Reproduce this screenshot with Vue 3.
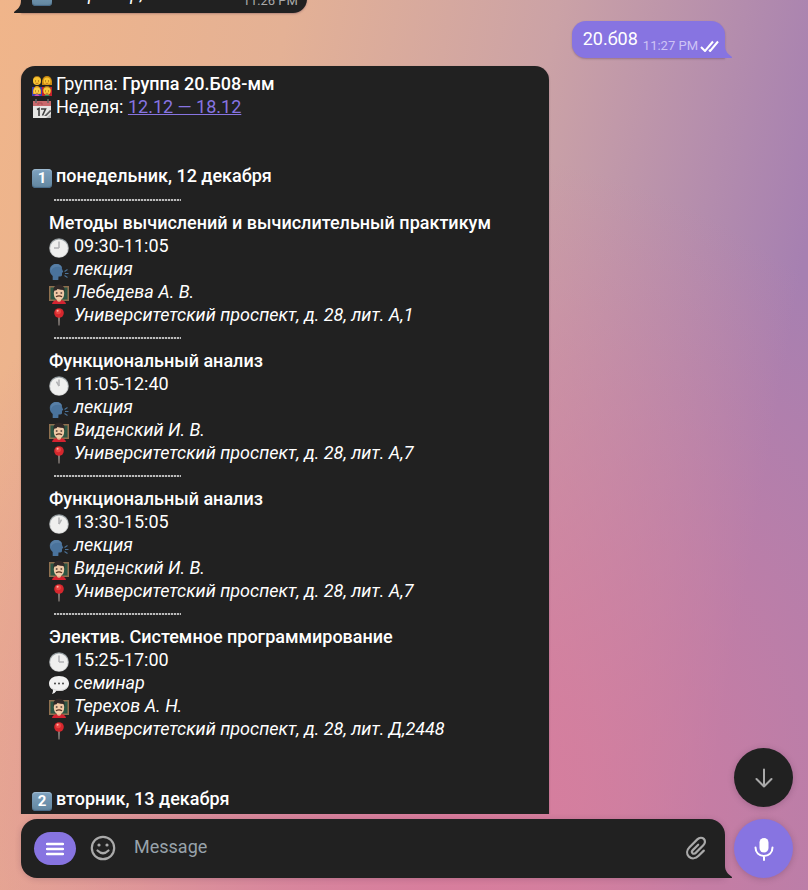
<template>
  <div class="chat">
    <svg class="sprite" aria-hidden="true">
      <symbol id="family" viewBox="0 0 20 20">
        <path d="M0 11h10v9H0z" fill="#3b3fb0" />
        <path d="M10 11h10v9H10z" fill="#c3202c" />
        <path d="M1 5Q1 0 5 0t4 5z" fill="#a8741a" />
        <circle cx="5" cy="5" r="4" fill="#f9c531" />
        <path d="M10 9V5q1-5 5-5t5 5v4z" fill="#c98a12" />
        <circle cx="15" cy="5" r="3.5" fill="#f9c531" />
        <path d="M1 18v-3q1-5 4-5t4 5v3z" fill="#e9a21c" />
        <circle cx="5" cy="15" r="3.4" fill="#fbd24a" />
        <path d="M2 20q3-3 6 0z" fill="#d848b4" />
        <path d="M11 15q0-5 4-5t4 5z" fill="#a8741a" />
        <circle cx="15" cy="15" r="3.7" fill="#fbca3a" />
        <path d="M12 20q3-3 6 0z" fill="#268c61" />
        <path d="M3 5h1m2 0h1M13 5h1m2 0h1M3 15h1m2 0h1M13 15h1m2 0h1" stroke="#8a5b13" />
        <path d="M3.500 7q1.500 1 3 0M13.500 7q1.500 1 3 0M3.500 17q1.500 1 3 0M13.500 17q1.500 1 3 0" stroke="#a85420" fill="none" stroke-width=".7" />
      </symbol>
      <symbol id="calendar" viewBox="0 0 20 20">
        <path d="M1 2h18v17H1z" fill="#e6e6e4" />
        <path d="M1 2h18v5H1z" fill="#c9696c" />
        <path d="M4 0v4M16 0v4" stroke="#666" stroke-width="1.500" />
        <path d="M7 3v2H5m4-2v2h2" stroke="#a94e52" fill="none" />
        <path d="M5 10.500l2-1V17M9 10h4.500l-3 6.500" stroke="#3d3d3d" stroke-width="1.600" fill="none" />
        <path d="M12 17l6-6 1.500 1-5 5z" fill="#5b5b5b" />
        <path d="M14 19l5-4v4z" fill="#b5b5b5" />
      </symbol>
      <symbol id="speaking" viewBox="0 0 20 20">
        <path d="M7 3c4 0 6 2 6 5l1.300 3-1.300.8v2.200c0 1.400-1 1.500-3.500 1.500L9.300 19H3.700v-4C2 13.600.8 11.800.8 9 .8 5.500 3.500 3 7 3z" fill="#4a739c" />
        <path d="M7 3c3 0 5 1 6 4-3-2-9-2-11 3-.8-4 2-7 5-7z" fill="#587fa6" />
        <path d="M15.500 10.500l3-2M16 12.500h3.500M15.500 14.500l3 2" stroke="#4b7196" stroke-width="1.200" />
      </symbol>
      <symbol id="teacher" viewBox="0 0 20 20">
        <path d="M0 2h20v15H0z" fill="#8f704f" />
        <path d="M1.500 3.500h17v12h-17z" fill="#2c5543" />
        <path d="M3 20q.5-4 7-4t7 4z" fill="#d52330" />
        <path d="M8 13h4v4l-2 1-2-1z" fill="#e0ad88" />
        <path d="M4.800 9q0-6 5.200-6t5.200 6q0 7-5.200 7.500Q4.800 16 4.800 9z" fill="#f0c9a6" />
        <path d="M4.500 9Q3 1 10 .5 17 1 15.500 9L14.500 6q-3 0-6-1-1 2-3 1.500z" fill="#302827" />
        <circle cx="7.700" cy="9" r="1" fill="#6b5548" />
        <circle cx="12.300" cy="9" r="1" fill="#6b5548" />
        <path d="M7 12.800q3-2 6 0" stroke="#573322" stroke-width="1.300" fill="none" />
      </symbol>
      <symbol id="pin" viewBox="0 0 20 20">
        <path d="M9.200 9h1.600l-.3 9.500h-1z" fill="#a39993" />
        <circle cx="10" cy="6" r="4.800" fill="#d6272d" />
        <circle cx="9.300" cy="4.600" r="2.600" fill="#ea4643" />
        <circle cx="8.600" cy="3.800" r="1" fill="#ffb0a5" />
      </symbol>
      <symbol id="speech" viewBox="0 0 20 20">
        <path d="M10 1c6 0 10 3 10 7.500S16 16 10 16q-1.500 0-2.500-.2Q5.500 19 3 19q1.200-1.500 1-4.200C1.500 13.500 0 11.500 0 8.500 0 4 4 1 10 1z" fill="#f1f1f1" />
        <path d="M1 11q3 4 9 4t9-4q-2 5-9 5-6 0-9-5z" fill="#d3d3d3" />
        <circle cx="6" cy="8.500" r="1" fill="#454545" />
        <circle cx="10" cy="8.500" r="1" fill="#454545" />
        <circle cx="14" cy="8.500" r="1" fill="#454545" />
      </symbol>
      <symbol id="tail" viewBox="0 0 8 12">
        <path d="M0 0C0 5 3 8 6.500 10.500Q7.800 12 6 12H0z" fill="currentColor" />
      </symbol>
    </svg>

    <main class="history" ref="history">
      <article class="bubble incoming short">
        <span class="row"><span class="keycap"></span><i>Например, 20.Б08</i></span>
        <time class="time">11:26 PM</time>
        <svg class="tail tail-left"><use href="#tail" /></svg>
      </article>

      <article class="bubble outgoing">
        <span>20.б08</span>
        <time class="time">11:27 PM</time>
        <svg class="checks" viewBox="0 0 19 12" aria-label="Read">
          <path d="M1 7l4 4 8-9.500M9 10l1.200 1L18 1.500" />
        </svg>
        <svg class="tail tail-right"><use href="#tail" /></svg>
      </article>

      <article class="bubble incoming schedule">
        <p class="row">
          <svg class="emoji"><use href="#family" /></svg>
          <span>Группа: <b>Группа 20.Б08-мм</b></span>
        </p>
        <p class="row">
          <svg class="emoji"><use href="#calendar" /></svg>
          <span>Неделя: <a href="#week">12.12 — 18.12</a></span>
        </p>

        <section v-for="day in days" :key="day.number" class="day">
          <h2 class="row"><span class="keycap">{{ day.number }}</span>{{ day.title }}</h2>
          <ul v-if="day.lessons.length" class="lessons">
            <li v-for="lesson in day.lessons" :key="lesson.time" class="lesson">
              <div class="separator"></div>
              <h3>{{ lesson.title }}</h3>
              <p class="row">
                <svg class="emoji" viewBox="0 0 20 20">
                  <defs>
                    <linearGradient :id="'rim' + lesson.hour" x1="0" y1="0" x2="0" y2="1">
                      <stop offset="0" stop-color="#8f989c" />
                      <stop offset="1" stop-color="#d4d4d4" />
                    </linearGradient>
                  </defs>
                  <circle cx="10" cy="10" r="9.800" :fill="`url(#rim${lesson.hour})`" />
                  <circle cx="10" cy="10.300" r="8.800" fill="#efefee" />
                  <path d="M10 10V3.500" class="hand" />
                  <path d="M10 10V5" class="hand" :transform="`rotate(${lesson.hour * 30} 10 10)`" />
                </svg>
                <span>{{ lesson.time }}</span>
              </p>
              <p class="row">
                <svg class="emoji"><use :href="lesson.type === 'лекция' ? '#speaking' : '#speech'" /></svg>
                <i>{{ lesson.type }}</i>
              </p>
              <p class="row">
                <svg class="emoji"><use href="#teacher" /></svg>
                <i>{{ lesson.teacher }}</i>
              </p>
              <p class="row">
                <svg class="emoji"><use href="#pin" /></svg>
                <i>Университетский проспект, д. 28, лит. {{ lesson.room }}</i>
              </p>
            </li>
          </ul>
        </section>
      </article>
    </main>

    <button type="button" class="round scroll-down" aria-label="Scroll down" @click="scrollDown">
      <svg width="18" height="20" viewBox="0 0 18 20">
        <path d="M9 1.500v17M1.500 11l7.500 7.500 7.500-7.500" />
      </svg>
    </button>

    <form class="footer" @submit.prevent="message = ''">
      <div class="composer">
        <button type="button" class="menu" aria-label="Menu">
          <svg width="18" height="14" viewBox="0 0 18 14">
            <path d="M1 2h16M1 7h16M1 12h16" />
          </svg>
        </button>
        <button type="button" class="tool" aria-label="Emoji">
          <svg width="26" height="26" viewBox="0 0 26 26">
            <circle cx="13" cy="13" r="11.200" />
            <path d="M7.500 15.500q5.500 5.500 11 0" />
            <circle cx="9" cy="10" r="1.600" class="dot" />
            <circle cx="17" cy="10" r="1.600" class="dot" />
          </svg>
        </button>
        <input v-model="message" type="text" placeholder="Message" aria-label="Message" />
        <button type="button" class="tool" aria-label="Attach file">
          <svg width="26" height="26" viewBox="0 0 26 26">
            <path d="M20.800 15.600l-5.200 5.200c-3 3-7 3.300-9.700.8-2.600-2.600-2.300-6.500.6-9.400l7.800-7.800c2-2 4.800-2.200 6.500-.5s1.500 4.400-.5 6.400l-7.600 7.600c-1 1-2.400 1.100-3.200.3s-.7-2.100.3-3.100l5.400-5.400" />
          </svg>
        </button>
        <svg class="tail tail-right"><use href="#tail" /></svg>
      </div>
      <button type="button" class="round record" aria-label="Record voice message">
        <svg width="20" height="24" viewBox="0 0 20 24">
          <rect x="5.500" y="1" width="9" height="14.500" rx="4.500" />
          <path d="M1.500 10.500c0 5 3.500 8.500 8.500 8.500s8.500-3.500 8.500-8.500M10 19v4" />
        </svg>
      </button>
    </form>
  </div>
</template>

<script setup>
import { ref, onMounted } from "vue";

const history = ref(null);
const message = ref("");

const days = [
  {
    number: 1,
    title: "понедельник, 12 декабря",
    lessons: [
      {
        title: "Методы вычислений и вычислительный практикум",
        time: "09:30-11:05",
        hour: 9,
        type: "лекция",
        teacher: "Лебедева А. В.",
        room: "А,1",
      },
      {
        title: "Функциональный анализ",
        time: "11:05-12:40",
        hour: 11,
        type: "лекция",
        teacher: "Виденский И. В.",
        room: "А,7",
      },
      {
        title: "Функциональный анализ",
        time: "13:30-15:05",
        hour: 1,
        type: "лекция",
        teacher: "Виденский И. В.",
        room: "А,7",
      },
      {
        title: "Электив. Системное программирование",
        time: "15:25-17:00",
        hour: 3,
        type: "семинар",
        teacher: "Терехов А. Н.",
        room: "Д,2448",
      },
    ],
  },
  { number: 2, title: "вторник, 13 декабря", lessons: [] },
];

function scrollDown() {
  history.value.scrollTop = history.value.scrollHeight;
}

onMounted(() => {
  // the previous message stays partly above the top edge
  history.value.scrollTop = 24;
});
</script>

<style>
body {
  margin: 0;
}
</style>

<style scoped>
.chat {
  position: relative;
  display: flex;
  flex-direction: column;
  height: 100vh;
  overflow: hidden;
  box-sizing: border-box;
  padding-bottom: 12px;
  font-family: Roboto, "Liberation Sans", sans-serif;
  font-size: 18px;
  line-height: 23px;
  color: #fff;
  background:
    radial-gradient(ellipse 75% 75% at 56% 92%, #d97b9c 0%, rgba(217, 123, 156, 0.8) 25%, rgba(217, 123, 156, 0) 100%),
    linear-gradient(100deg, #f0b58a 0%, #e4b195 30%, #cba2a6 58%, #a680b1 88%);
}

.sprite {
  display: none;
}

.history {
  flex: 1;
  min-height: 0;
  display: flex;
  flex-direction: column;
  align-items: flex-start;
  gap: 8px;
  padding: 0 83px 0 21px;
  overflow-y: auto;
  scrollbar-width: none;
}

.bubble {
  position: relative;
  flex-shrink: 0;
  box-sizing: border-box;
  padding: 6px 11px 8px;
  border-radius: 14px;
  box-shadow: 0 1px 2px rgba(60, 30, 60, 0.3);
}

.incoming {
  color: #fff;
  background: #212121;
}

.short {
  display: flex;
  gap: 40px;
  padding-right: 9px;
  border-bottom-left-radius: 0;
}

.outgoing {
  display: flex;
  align-self: flex-end;
  gap: 5px;
  padding-right: 6px;
  background: #8774e1;
  border-bottom-right-radius: 0;
}

.time {
  align-self: flex-end;
  margin-bottom: -4px;
  font-size: 13px;
  line-height: 16px;
  color: #aaa;
}

.outgoing .time {
  color: #cdc3f5;
}

.checks {
  align-self: flex-end;
  width: 19px;
  height: 12px;
  margin: 0 0 -2px -3px;
  fill: none;
  stroke: #fff;
  stroke-width: 2;
}

.tail {
  position: absolute;
  bottom: 0;
  width: 8px;
  height: 12px;
}

.tail-right {
  left: 100%;
}

.tail-left {
  right: 100%;
  transform: scaleX(-1);
}

.incoming .tail {
  color: #212121;
}

.outgoing .tail {
  color: #8774e1;
}

.schedule {
  width: 75%;
  padding-bottom: 60px;
}

.row {
  display: flex;
  align-items: flex-end;
  gap: 4px;
}

.lesson .row {
  gap: 5px;
}

p,
h2,
h3 {
  margin: 0;
  font-size: inherit;
}

b,
h2,
h3 {
  font-weight: 500;
}

a {
  color: #8774e1;
  text-decoration: underline;
}

.emoji {
  flex: none;
  width: 20px;
  height: 20px;
  margin-bottom: -1px;
}

.hand {
  stroke: #b0b1b3;
  stroke-width: 1.5;
}

.keycap {
  flex: none;
  width: 20px;
  height: 19px;
  margin-bottom: -1px;
  border-radius: 4px;
  box-shadow: inset 0 -1px 1px #456885, inset 0 1px 1px #a1bdd3;
  background: linear-gradient(#7fa2c0, #62869f);
  font-size: 15px;
  font-weight: 700;
  line-height: 19px;
  text-align: center;
}

.day {
  padding-top: 46px;
}

.lessons {
  margin: 0;
  padding: 1px 0 1px 17px;
  list-style: none;
}

.separator {
  display: flex;
  align-items: center;
  width: 127px;
  height: 23px;
  margin-left: 5px;
}

.separator::before {
  content: "";
  flex: 1;
  height: 2px;
  background: repeating-linear-gradient(90deg, #bbb 0 2px, #444 2px 3px);
}

.round {
  display: flex;
  align-items: center;
  justify-content: center;
  flex: none;
  width: 59px;
  height: 59px;
  padding: 0;
  border: 0;
  border-radius: 50%;
  cursor: pointer;
  box-shadow: 0 1px 6px rgba(60, 30, 60, 0.25);
}

.round svg {
  fill: none;
  stroke-width: 2;
  stroke-linecap: round;
  stroke-linejoin: round;
}

.scroll-down {
  position: absolute;
  right: 15px;
  bottom: 83px;
  background: #212121;
}

.scroll-down svg {
  stroke: #aaa;
}

.record {
  background: #8774e1;
}

.record svg {
  stroke: #fff;
}

.record rect {
  fill: #fff;
  stroke: none;
}

.footer {
  display: flex;
  gap: 9px;
  padding: 5px 15px 0 21px;
}

.composer {
  position: relative;
  flex: 1;
  min-width: 0;
  display: flex;
  align-items: center;
  gap: 14px;
  padding: 0 16px 0 13px;
  border-radius: 16px 16px 0 16px;
  color: #212121;
  background: #212121;
  box-shadow: 0 1px 6px rgba(60, 30, 60, 0.2);
}

.composer button {
  display: flex;
  align-items: center;
  justify-content: center;
  padding: 0;
  border: 0;
  background: none;
  cursor: pointer;
}

.composer .menu {
  width: 42px;
  height: 33px;
  border-radius: 17px;
  background: #8774e1;
}

.menu svg {
  stroke: #fff;
  stroke-width: 2.4;
  stroke-linecap: round;
}

.composer .tool {
  padding-bottom: 2px;
}

.tool svg {
  fill: none;
  stroke: #aaa;
  stroke-width: 2.2;
  stroke-linecap: round;
}

.tool .dot {
  fill: #aaa;
  stroke: none;
}

input {
  flex: 1;
  min-width: 0;
  padding: 0 4px 4px;
  border: 0;
  outline: 0;
  font: inherit;
  color: #fff;
  background: transparent;
}

input::placeholder {
  color: #98a3ab;
  opacity: 1;
}
</style>
